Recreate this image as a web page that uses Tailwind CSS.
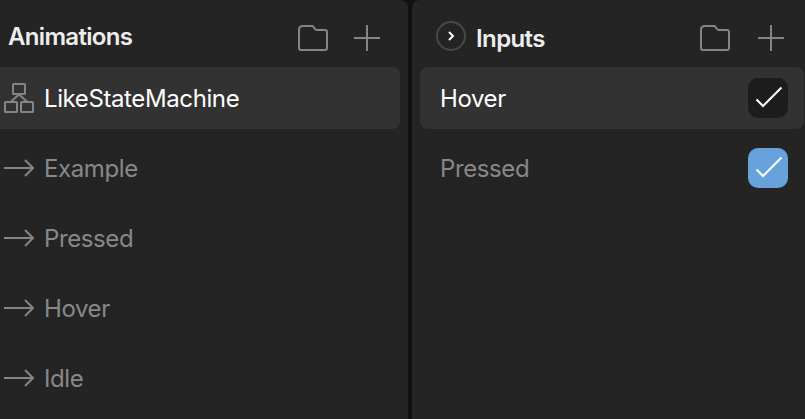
<!DOCTYPE html>
<html lang="en">
<head>
<meta charset="utf-8">
<title>Animations</title>
<script src="https://cdn.jsdelivr.net/npm/@tailwindcss/browser@4"></script>
</head>
<body class="bg-[#111111] overflow-hidden">
<svg class="hidden">
  <symbol id="folder" viewBox="0 0 30 26"><path d="M1 5Q1 1 5 1H14Q15 1 15.6 2L17.2 4.3Q17.7 5 18.6 5H27Q29 5 29 7V23Q29 25 27 25H3Q1 25 1 23Z" fill="none" stroke="#858585" stroke-width="2"/></symbol>
  <symbol id="plus" viewBox="0 0 26 26"><path d="M0 13H26M13 0V26" fill="none" stroke="#858585" stroke-width="2"/></symbol>
  <symbol id="arrow" viewBox="0 0 30 18"><path d="M0 9H29M21 1L29 9L21 17" fill="none" stroke="#858585" stroke-width="2"/></symbol>
  <symbol id="check" viewBox="0 0 40 40"><path d="M8.5 21.5L15 28L33.5 9.5" fill="none" stroke="#fff" stroke-width="2.1"/></symbol>
</svg>
<main class="flex gap-1 w-[805px] h-[419px] font-['Inter',sans-serif] text-[24px] leading-[30px] tracking-[-0.39px] text-[#888888]">
  <section class="w-[408px] shrink-0 bg-[#242424] rounded-tr-lg">
    <header class="h-[67px] flex items-start pl-2">
      <h1 class="mt-[22px] w-[290px] font-semibold text-[#eeeeee] tracking-[-0.68px]">Animations</h1>
      <svg class="mt-[25px] w-[30px] h-[26px]"><use href="#folder"/></svg>
      <svg class="mt-[25px] ml-[26px] w-[26px] h-[26px]"><use href="#plus"/></svg>
    </header>
    <ul class="flex flex-col gap-2 pr-2">
      <li class="h-[62px] flex items-center gap-2.5 pl-1 bg-[#323232] rounded-r-lg text-white">
        <svg class="w-[30px] h-[30px]" viewBox="0 0 30 30" fill="none" stroke="#858585" stroke-width="2"><rect x="9" y="1" width="12" height="10" rx=".5"/><rect x="1" y="19" width="12" height="10" rx=".5"/><rect x="17" y="19" width="12" height="10" rx=".5"/><path d="M7 18.5L15 11.5L23 18.5"/></svg>
        <span class="pt-0.5">LikeStateMachine</span>
      </li>
      <li class="h-[62px] flex items-center gap-2.5 pl-1"><svg class="w-[30px] h-[18px]"><use href="#arrow"/></svg><span class="pt-0.5">Example</span></li>
      <li class="h-[62px] flex items-center gap-2.5 pl-1"><svg class="w-[30px] h-[18px]"><use href="#arrow"/></svg><span class="pt-0.5">Pressed</span></li>
      <li class="h-[62px] flex items-center gap-2.5 pl-1"><svg class="w-[30px] h-[18px]"><use href="#arrow"/></svg><span class="pt-0.5">Hover</span></li>
      <li class="h-[62px] flex items-center gap-2.5 pl-1"><svg class="w-[30px] h-[18px]"><use href="#arrow"/></svg><span class="pt-0.5">Idle</span></li>
    </ul>
  </section>
  <section class="w-[393px] shrink-0 bg-[#242424] rounded-tl-lg">
    <header class="h-[67px] flex items-start pl-6">
      <svg class="mt-[21px] w-[30px] h-[30px]" viewBox="0 0 30 30" fill="none"><circle cx="15" cy="15" r="14" stroke="#484848" stroke-width="2"/><path d="M13 11L17 15L13 19" stroke="#fff" stroke-width="2"/></svg>
      <h1 class="mt-[24px] ml-[10px] w-[224px] font-semibold text-[#eeeeee] tracking-[-0.6px]">Inputs</h1>
      <svg class="mt-[25px] w-[30px] h-[26px]"><use href="#folder"/></svg>
      <svg class="mt-[25px] ml-[28px] w-[26px] h-[26px]"><use href="#plus"/></svg>
    </header>
    <ul class="flex flex-col gap-2 pl-2 pr-px">
      <li class="h-[62px] flex items-center justify-between pl-5 pr-4 bg-[#323232] rounded-lg text-white"><span class="pt-0.5">Hover</span><svg class="w-10 h-10 rounded-[10px] bg-[#1d1d1d]"><use href="#check"/></svg></li>
      <li class="h-[62px] flex items-center justify-between pl-5 pr-4"><span class="pt-0.5">Pressed</span><svg class="w-10 h-10 rounded-[10px] bg-[#68a2dc]"><use href="#check"/></svg></li>
    </ul>
  </section>
</main>
</body>
</html>
